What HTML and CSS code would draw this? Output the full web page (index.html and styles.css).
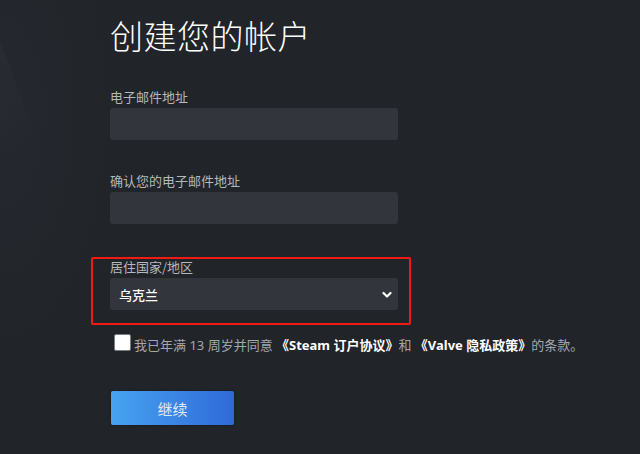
FILE: index.html
```html
<!DOCTYPE html>
<html lang="zh-CN">
<head>
<meta charset="utf-8">
<title>创建您的帐户</title>
<link rel="stylesheet" href="styles.css">
</head>
<body>
<div class="page">
  <div class="bg-shape"></div>
  <main class="form">
    <h1 class="title">创建您的帐户</h1>
    <div class="field">
      <label class="label">电子邮件地址</label>
      <div class="input"></div>
    </div>
    <div class="field">
      <label class="label">确认您的电子邮件地址</label>
      <div class="input"></div>
    </div>
    <div class="field highlight">
      <label class="label">居住国家/地区</label>
      <div class="input select">
        <span class="value">乌克兰</span>
        <svg class="chevron" width="10" height="8" viewBox="0 0 10 8"><path d="M1.5 2 L5 5.5 L8.5 2" fill="none" stroke="#ffffff" stroke-width="2.2" stroke-linecap="round" stroke-linejoin="round"/></svg>
      </div>
    </div>
    <div class="agree">
      <span class="checkbox"></span>
      <span class="agree-text">我已年满 13 周岁并同意 <b>《Steam 订户协议》</b>和 <b>《Valve 隐私政策》</b>的条款。</span>
    </div>
    <button class="btn">继续</button>
  </main>
</div>
</body>
</html>
```

FILE: styles.css
```css
html, body {
  margin: 0;
  padding: 0;
}
body {
  background: #212429;
  font-family: "Noto Sans", "Noto Sans CJK SC", sans-serif;
  width: 640px;
  height: 454px;
  overflow: hidden;
}
.page {
  position: relative;
  width: 640px;
  height: 454px;
  background: radial-gradient(ellipse 120px 260px at 0% 25%, #25292f 0%, #212429 100%);
}
.bg-shape {
  position: absolute;
  left: -20px;
  top: 40px;
  width: 40px;
  height: 110px;
  background: linear-gradient(160deg, rgba(255,255,255,0.025), rgba(255,255,255,0.0));
  transform: skewX(20deg);
}
.form {
  position: relative;
  padding: 15px 0 0 110px;
}
.title {
  margin: 0;
  font-family: "Noto Sans CJK SC", sans-serif;
  font-size: 33px;
  line-height: 40px;
  font-weight: 300;
  color: #ffffff;
  letter-spacing: 0.5px;
}
.field {
  margin-top: 34px;
  width: 288px;
}
.field + .field {
  margin-top: 33px;
}
.field + .field.highlight {
  margin-top: 35px;
}
.label {
  display: block;
  font-family: "Noto Sans CJK SC", sans-serif;
  font-size: 13px;
  line-height: 16px;
  color: #b5b8bc;
  margin-bottom: 3px;
}
.input {
  height: 32px;
  background: #32353c;
  border-radius: 3px;
}
.select {
  display: flex;
  align-items: center;
  justify-content: space-between;
  padding: 0 6px 0 9px;
}
.value {
  font-family: "Noto Sans CJK SC", sans-serif;
  font-size: 13px;
  color: #ffffff;
  font-weight: 500;
}
.chevron {
  margin-top: 1px;
}
.highlight {
  position: relative;
}
.highlight::after {
  content: "";
  position: absolute;
  left: -19px;
  top: -2px;
  right: -13px;
  bottom: -15px;
  border: 2px solid #f01c14;
  border-radius: 2px;
}
.agree {
  display: flex;
  align-items: flex-end;
  margin-top: 24px;
  margin-left: 4px;
}
.checkbox {
  width: 15px;
  height: 15px;
  background: #ffffff;
  border: 1px solid #7a7d82;
  border-radius: 2px;
  flex: none;
}
.agree-text {
  margin-left: 3px;
  font-family: "Noto Sans", "Noto Sans CJK SC", sans-serif;
  font-size: 13px;
  line-height: 16px;
  color: #a3a8ae;
  white-space: nowrap;
  margin-bottom: -2px;
}
.agree-text b {
  color: #ffffff;
  font-weight: 700;
}
.btn {
  display: block;
  margin-top: 40px;
  margin-left: 1px;
  width: 123px;
  height: 34px;
  border: none;
  border-radius: 2px;
  background: linear-gradient(90deg, #47a3f0 0%, #2f6ad8 100%);
  color: #dfe9f7;
  font-family: "Noto Sans CJK SC", sans-serif;
  font-size: 15px;
  padding: 0;
  box-shadow: 0 0 3px rgba(0,0,0,0.4);
}
```
